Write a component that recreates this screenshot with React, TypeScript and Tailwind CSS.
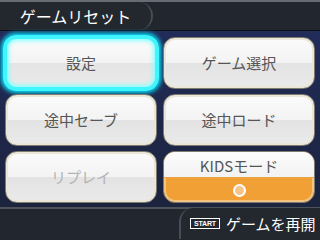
import React from 'react';

const font = { fontFamily: '"Noto Sans CJK JP", "Noto Sans", sans-serif' };

function MenuButton({ label, dim = false, selected = false }: { label: string; dim?: boolean; selected?: boolean }) {
  if (selected) {
    return (
      <div className="rounded-[13px] border-[4px] border-[#3ff6ff] shadow-[0_0_4px_2px_#00e5ff,inset_0_0_4px_2px_#8ff] bg-[linear-gradient(#fbfbfb_0%,#f3f3f3_50%,#e4e4e4_50%,#eaeaea_100%)] flex items-center justify-center -mx-[2px] -my-[2px]">
        <span className="text-[15px] text-[#555]">{label}</span>
      </div>
    );
  }
  return (
    <div className="rounded-[12px] border border-[#7d7b72] shadow-[inset_0_0_0_2px_#ebe7d8] bg-[linear-gradient(#fbfbfb_0%,#f3f3f3_50%,#e3e3e3_50%,#eaeaea_100%)] flex items-center justify-center">
      <span className={`text-[15px] ${dim ? 'text-[#b4b4b4]' : 'text-[#555]'}`}>{label}</span>
    </div>
  );
}

export default function App() {
  return (
    <div className="w-[320px] h-[240px] flex flex-col overflow-hidden bg-[linear-gradient(#232d5e,#1a2238)]" style={font}>
      {/* top bar */}
      <header className="h-[31px] flex-shrink-0 bg-[#22272f] border-t-2 border-[#666b74] border-b border-b-[#0c0f14] flex">
        <div className="w-[153px] h-full rounded-r-[14px] border-r-2 border-[#484d56] bg-[#23282f] flex items-center justify-center">
          <span className="text-white text-[16px] leading-none -mt-[1px]">ゲームリセット</span>
        </div>
      </header>

      {/* menu grid */}
      <main className="flex-1 grid grid-cols-2 grid-rows-[52px_52px_52px] gap-x-[6px] gap-y-[5px] px-[5px] pt-[6px] pb-[4px]">
        <MenuButton label="設定" selected />
        <MenuButton label="ゲーム選択" />
        <MenuButton label="途中セーブ" />
        <MenuButton label="途中ロード" />
        <MenuButton label="リプレイ" dim />
        <div className="rounded-[12px] border border-[#7d7b72] overflow-hidden flex flex-col bg-[#f1a035] shadow-[inset_0_0_0_2px_#f3c580]">
          <div className="h-[26px] flex items-end justify-center bg-[linear-gradient(#fcfcfc,#f2f2f2)] border-b border-[#e9a548]">
            <span className="text-[15px] leading-none text-[#555] pb-[4px]">KIDSモード</span>
          </div>
          <div className="flex-1 flex items-center justify-center">
            <div className="w-[13px] h-[13px] rounded-full border-2 border-white bg-[#f7c48a]" />
          </div>
        </div>
      </main>

      {/* bottom bar */}
      <footer className="h-[33px] flex-shrink-0 bg-[#22272f] border-t-2 border-[#4d525b] flex justify-end">
        <div className="w-[141px] h-full rounded-tl-[14px] border-l-2 border-[#484d56] -mt-[1px] bg-[#23282f] flex items-center gap-[6px] pl-[9px]">
          <span className="border border-white text-white text-[7px] font-bold leading-none px-[3px] py-[1px] tracking-tight" style={{ fontFamily: '"Liberation Sans", sans-serif' }}>
            START
          </span>
          <span className="text-white text-[15px] leading-none">ゲームを再開</span>
        </div>
      </footer>
    </div>
  );
}
